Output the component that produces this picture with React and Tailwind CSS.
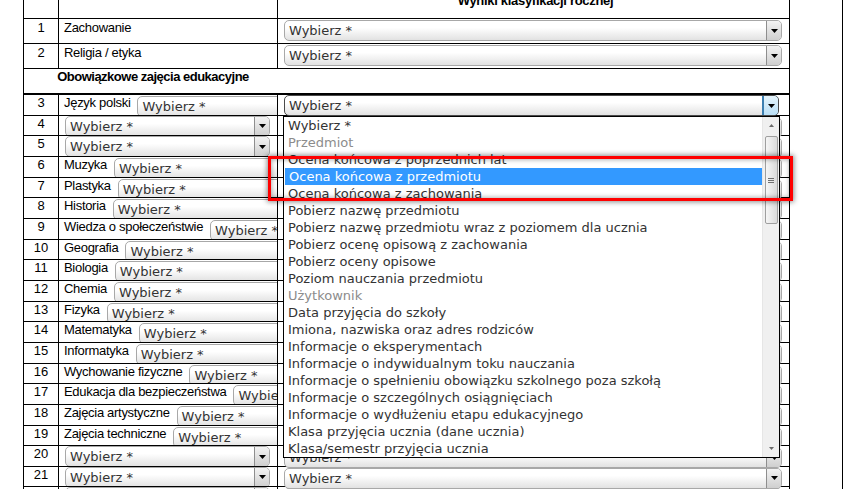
import React from 'react'

const body = [
  { n: 3, label: 'Język polski' },
  { n: 4 },
  { n: 5 },
  { n: 6, label: 'Muzyka' },
  { n: 7, label: 'Plastyka' },
  { n: 8, label: 'Historia' },
  { n: 9, label: 'Wiedza o społeczeństwie' },
  { n: 10, label: 'Geografia' },
  { n: 11, label: 'Biologia' },
  { n: 12, label: 'Chemia' },
  { n: 13, label: 'Fizyka' },
  { n: 14, label: 'Matematyka' },
  { n: 15, label: 'Informatyka' },
  { n: 16, label: 'Wychowanie fizyczne' },
  { n: 17, label: 'Edukacja dla bezpieczeństwa' },
  { n: 18, label: 'Zajęcia artystyczne' },
  { n: 19, label: 'Zajęcia techniczne' },
  { n: 20 },
  { n: 21 },
  { n: 22 },
]

const options = [
  { t: 'Wybierz *' },
  { t: 'Przedmiot', group: true },
  { t: 'Ocena końcowa z poprzednich lat' },
  { t: 'Ocena końcowa z przedmiotu', active: true },
  { t: 'Ocena końcowa z zachowania' },
  { t: 'Pobierz nazwę przedmiotu' },
  { t: 'Pobierz nazwę przedmiotu wraz z poziomem dla ucznia' },
  { t: 'Pobierz ocenę opisową z zachowania' },
  { t: 'Pobierz oceny opisowe' },
  { t: 'Poziom nauczania przedmiotu' },
  { t: 'Użytkownik', group: true },
  { t: 'Data przyjęcia do szkoły' },
  { t: 'Imiona, nazwiska oraz adres rodziców' },
  { t: 'Informacje o eksperymentach' },
  { t: 'Informacje o indywidualnym toku nauczania' },
  { t: 'Informacje o spełnieniu obowiązku szkolnego poza szkołą' },
  { t: 'Informacje o szczególnych osiągnięciach' },
  { t: 'Informacje o wydłużeniu etapu edukacyjnego' },
  { t: 'Klasa przyjęcia ucznia (dane ucznia)' },
  { t: 'Klasa/semestr przyjęcia ucznia' },
]

export default function App() {
  return (
    <div className="relative h-[489px] w-[865px] overflow-hidden bg-white font-['Liberation_Sans',Arial,sans-serif] text-[13px] text-black">
      <div className="flex h-full pl-[23px]">
        <div className="w-[767px] shrink-0 border-l border-black">
          {/* header */}
          <div className="flex h-[19px] border-b border-black">
            <div className="w-[35px] border-r border-black" />
            <div className="w-[219px] border-r border-black" />
            <div className="w-[512px] overflow-hidden border-r border-black text-center">
              <div className="-mt-[7px] pl-[4px] font-bold leading-[15px] tracking-[-0.3px]">Wyniki klasyfikacji rocznej</div>
            </div>
          </div>

          <TopRow n={1} label="Zachowanie" />
          <TopRow n={2} label="Religia / etyka" />

          {/* section */}
          <div className="flex h-[26px] border-b-2 border-black">
            <div className="w-[766px] border-r border-black">
              <div className="w-[258px] text-center font-bold leading-[16px] tracking-[-0.5px]">Obowiązkowe zajęcia edukacyjne</div>
            </div>
          </div>

          {body.map(r => (
            <BodyRow key={r.n} row={r} />
          ))}
        </div>
        <div className="ml-[52px] h-full border-l border-black" />
      </div>

      {/* open list of row 3 */}
      <div className="absolute left-[283px] top-[116px] flex h-[342px] w-[497px] border border-black bg-white font-['DejaVu_Sans',Verdana,sans-serif] text-[13px]">
        <div className="w-[478px] overflow-hidden">
          {options.map(o => (
            <div
              key={o.t}
              className={`h-[17px] whitespace-nowrap pl-[4px] leading-[17px] ${
                o.active ? 'ml-[1px] bg-[#3399ff] pl-[3px] text-white' : o.group ? 'text-[#8c8c8c]' : 'text-[#333]'
              }`}
            >
              {o.t}
            </div>
          ))}
        </div>
        <Scrollbar />
      </div>

      {/* highlight frame */}
      <div className="absolute left-[268px] top-[156px] h-[45px] w-[525px] border-[3px] border-[#ff0000] shadow-[0_0_5px_1px_rgba(0,0,0,0.45),inset_0_0_4px_1px_rgba(0,0,0,0.3)]" />
    </div>
  )
}

function TopRow({ n, label }) {
  return (
    <div className="flex h-[25px] border-b border-black">
      <div className="w-[35px] border-r border-black pt-[1px] text-center leading-[16px]">{n}</div>
      <div className="w-[219px] border-r border-black pl-[5px] pt-[1px] leading-[16px] tracking-[-0.3px]">{label}</div>
      <div className="w-[512px] border-r border-black pl-[6px] pt-[1px]">
        <Select width="w-[498px]" />
      </div>
    </div>
  )
}

function BodyRow({ row }) {
  const focus = row.n === 3
  return (
    <div className="flex h-[20.67px] border-b border-black">
      <div className="w-[35px] border-r border-black text-center leading-[16px]">{row.n}</div>
      {row.label ? (
        <div className="flex w-[219px] items-start overflow-hidden whitespace-nowrap border-r border-black pl-[5px]">
          <span className="leading-[16px] tracking-[-0.3px]">{row.label}</span>
          <div className="ml-[7px] mt-[1px] shrink-0">
            <Select width="w-[205px]" />
          </div>
        </div>
      ) : (
        <div className="w-[219px] overflow-hidden border-r border-black pl-[6px]">
          <Select width="w-[205px]" />
        </div>
      )}
      <div className={`w-[512px] border-r border-black pl-[6px] ${focus ? 'pt-0' : 'pt-[1px]'}`}>
        <Select width={focus ? 'w-[495px]' : 'w-[498px]'} focus={focus} />
      </div>
    </div>
  )
}

function Select({ width, focus }) {
  return (
    <div
      className={`flex h-[21px] ${width} items-stretch overflow-hidden rounded-[5px] border bg-gradient-to-b from-white from-35% to-[#e2e2e2] font-['DejaVu_Sans',Verdana,sans-serif] text-[13px] text-[#333] ${
        focus ? 'border-[#4a4a4a]' : 'border-[#a8a8a8]'
      }`}
    >
      <span className="flex-1 whitespace-nowrap pl-[4px] leading-[19px]">Wybierz *</span>
      <span
        className={`flex w-[15px] items-center justify-center rounded-r-[3px] border-l ${
          focus
            ? 'border-[#3c7fb1] bg-gradient-to-b from-[#e5f4fc] to-[#b9dff6] outline outline-1 outline-[#3c7fb1]'
            : 'border-[#8e8e8e] bg-gradient-to-b from-[#f3f3f3] to-[#cfcfcf]'
        }`}
      >
        <svg width="7" height="4" viewBox="0 0 7 4">
          <path d="M0 0h7L3.5 4z" fill="#000" />
        </svg>
      </span>
    </div>
  )
}

function Scrollbar() {
  return (
    <div className="flex w-[17px] flex-col items-center border-l border-[#e6e6e6] bg-[#f0f0f0]">
      <div className="flex h-[17px] items-center justify-center">
        <svg width="5" height="3" viewBox="0 0 5 3">
          <path d="M0 3h5L2.5 0z" fill="#6a6a6a" />
        </svg>
      </div>
      <div className="mt-[2px] flex h-[88px] w-[13px] items-center justify-center rounded-[2px] border border-[#9f9f9f] bg-gradient-to-r from-[#f6f6f6] to-[#dadada]">
        <div className="flex flex-col gap-[1px]">
          <div className="h-px w-[6px] bg-[#6f6f6f]" />
          <div className="h-px w-[6px] bg-[#6f6f6f]" />
          <div className="h-px w-[6px] bg-[#6f6f6f]" />
        </div>
      </div>
      <div className="flex-1" />
      <div className="flex h-[17px] items-center justify-center">
        <svg width="5" height="3" viewBox="0 0 5 3">
          <path d="M0 0h5L2.5 3z" fill="#6a6a6a" />
        </svg>
      </div>
    </div>
  )
}
